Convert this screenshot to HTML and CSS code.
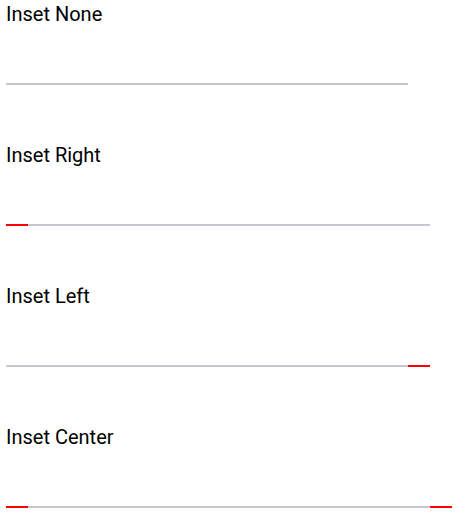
FILE: index.html
```html
<!DOCTYPE html>
<html>
<head>
<meta charset="utf-8">
<link rel="stylesheet" href="styles.css">
</head>
<body>
<div class="page">
  <section class="demo">
    <div class="label">Inset None</div>
    <div class="divider"><span class="line"></span></div>
  </section>
  <section class="demo">
    <div class="label">Inset Right</div>
    <div class="divider"><span class="inset"></span><span class="line"></span></div>
  </section>
  <section class="demo">
    <div class="label">Inset Left</div>
    <div class="divider"><span class="line"></span><span class="inset"></span></div>
  </section>
  <section class="demo last">
    <div class="label">Inset Center</div>
    <div class="divider"><span class="inset"></span><span class="line"></span><span class="inset"></span></div>
  </section>
</div>
</body>
</html>
```
FILE: styles.css
```css
html, body {
  margin: 0;
  padding: 0;
  background: #ffffff;
}
.page {
  padding: 3px 6px 0 6px;
  font-family: Roboto, "Liberation Sans", sans-serif;
}
.demo {
  height: 141px;
  display: flex;
  flex-direction: column;
}
.demo.last {
  height: auto;
}
.label {
  font-size: 20px;
  font-weight: 400;
  line-height: 23px;
  color: #000000;
}
.divider {
  margin-top: 57px;
  display: flex;
  height: 2px;
}
.line {
  width: 402px;
  height: 2px;
  background: #cac4d0;
}
.inset {
  width: 22px;
  height: 2px;
  background: #ff0000;
}
```
